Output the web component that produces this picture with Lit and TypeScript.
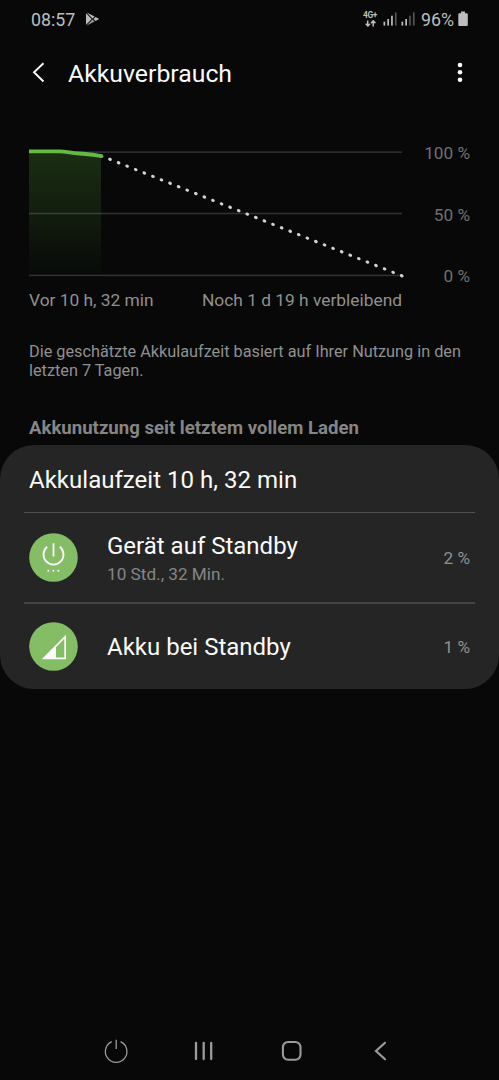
import { LitElement, html, css, svg } from "lit";
import { customElement } from "lit/decorators.js";

const dots = Array.from({ length: 35 }, (_, i) => ({
  x: 81 + i * 8.58,
  y: 18.3 + i * 3.425,
}));

@customElement("app-root")
export class AppRoot extends LitElement {
  static styles = css`
    :host {
      display: block;
      height: 1080px;
      background: #080808;
      color: #fafafa;
      font-family: Roboto, sans-serif;
      overflow: hidden;
    }
    .screen { display: flex; flex-direction: column; height: 1080px; }
    svg { display: block; flex: none; }
    span, p, h1, h2 { white-space: nowrap; margin: 0; font-weight: 400; }
    .status {
      display: flex; align-items: center; height: 40px;
      padding: 0 31px; color: #bdbdbd; font-size: 17.8px;
    }
    .status > span { line-height: 20px; }
    .status .play { margin-left: 10px; margin-top: -2px; }
    .status .right { margin-left: auto; display: flex; align-items: center; height: 38px; align-self: flex-start; }
    .right .net { margin-right: -1px; }
    .right .sim { margin-top: -1px; }
    .pct { font-size: 17.8px; margin: 2px 4px 0 2px; line-height: 20px; }
    .bar {
      display: flex; align-items: center; height: 66px; padding: 0 29px;
    }
    .bar h1 { font-size: 24.8px; margin-left: 20px; }
    .bar .more { margin-left: auto; }
    .chart { display: flex; height: 148px; margin-top: 30px; padding: 0 29px; justify-content: space-between; }
    .scale {
      display: flex; flex-direction: column; justify-content: space-between;
      align-items: flex-end; height: 150px; padding-top: 7px; box-sizing: border-box;
      font-size: 17.2px; line-height: 20px; color: #707070;
    }
    .captions {
      display: flex; justify-content: space-between; width: 373px;
      margin: 6px 0 0 29px; font-size: 17.35px; line-height: 20px; color: #909090;
    }
    .note { margin: 32px 29px 0; font-size: 16.27px; line-height: 19px; color: #909090; height: 38px; }
    .heading { margin: 37px 29px 0; font-size: 18.6px; line-height: 22px; font-weight: 700; color: #858585; }
    .card { margin-top: 6px; height: 244px; border-radius: 34px; background: #252525; display: flex; flex-direction: column; }
    .total { font-size: 24.05px; line-height: 70px; padding-left: 29px; height: 67px; }
    .line { height: 2px; margin: 0 24px; background: #444; flex: none; }
    .total + .line { height: 1px; margin-bottom: 1px; background: #505050; }
    .row { display: flex; align-items: center; padding: 0 29px; height: 88px; }
    .row.standby { box-sizing: border-box; padding-bottom: 2px; }
    .row.last { height: 85px; }
    .row.last svg { margin-top: -1px; }
    .names { display: flex; flex-direction: column; margin-left: 29px; flex: 1; }
    .name { font-size: 24px; line-height: 30px; }
    .standby .name { padding-top: 1px; }
    .time { font-size: 17.2px; line-height: 20px; color: #858585; margin-top: 3px; }
    .share { font-size: 17.2px; color: #909090; }
    .standby .share { padding-top: 2px; }
    .nav { margin-top: auto; height: 58px; display: grid; grid-template-columns: repeat(4, 88px); justify-content: center; padding-right: 3px; }
    .nav svg { margin: 0 auto; }
  `;

  private bars(lit: number) {
    const tops = [9.7, 7, 3.7, 0.4];
    return html`<svg class="sim" width="18" height="14" viewBox="0 0 18 14">
      ${tops.map((t, i) => svg`<rect x=${0.5 + i * 3.8} y=${t} width="1.7" height=${13.6 - t} fill=${i < lit ? "#bdbdbd" : "#555"} />`)}
    </svg>`;
  }

  render() {
    return html`<div class="screen">
      <div class="status">
        <span>08:57</span>
        <svg class="play" width="16" height="16" viewBox="0 0 16 16" fill="#bdbdbd">
          <path d="M1 2.2V13.8L6.7 8Z" /><path d="M1.7 1.4L9.6 5.6L7.5 7.4Z" />
          <path d="M1.7 14.6L9.6 10.4L7.5 8.6Z" opacity=".8" /><path d="M8.4 8L10.6 6L14.2 8L10.6 10Z" />
        </svg>
        <div class="right">
          <svg class="net" width="21" height="18" viewBox="0 0 21 18" fill="#bdbdbd">
            <text x="0" y="8.4" font-family="Roboto, sans-serif" font-size="8.4" font-weight="700" textLength="14.4">4G+</text>
            <path d="M4.7 10.5V16M2.7 13.8L4.9 16L7 13.8M10.2 16.4V11M8 13.1L10.2 10.9L12.4 13.1" fill="none" stroke="#bdbdbd" stroke-width="1.5" />
          </svg>
          ${this.bars(3)}${this.bars(2)}
          <span class="pct">96%</span>
          <svg width="10" height="16" viewBox="0 0 10 16"><path d="M3 .6H7V2.2H8.7Q9.8 2.2 9.8 3.3V14Q9.8 15 8.7 15H1.3Q.3 15 .3 14V3.3Q.3 2.2 1.3 2.2H3Z" fill="#bdbdbd" /></svg>
        </div>
      </div>

      <div class="bar">
        <svg width="19" height="24" viewBox="0 0 19 24"><path d="M14.5 2.3L5 11.3L14.5 20.5" fill="none" stroke="#fafafa" stroke-width="1.9" /></svg>
        <h1>Akkuverbrauch</h1>
        <svg class="more" width="20" height="24" viewBox="0 0 20 24" fill="#fafafa">
          <circle cx="10" cy="4" r="2.3" /><circle cx="10" cy="11.3" r="2.3" /><circle cx="10" cy="18.7" r="2.3" />
        </svg>
      </div>

      <div class="chart">
        <svg width="380" height="148" viewBox="0 -5 380 148">
          <defs><linearGradient id="fill" x1="0" y1="0" x2="0" y2="1">
            <stop offset="0" stop-color="#1b2e13" /><stop offset=".5" stop-color="#121d0e" /><stop offset="1" stop-color="#080a08" />
          </linearGradient></defs>
          <path d="M0 10.5H32L50 12.5L72 15V133H0Z" fill="url(#fill)" />
          <g fill="#b0b0b0" fill-opacity=".24">
            <rect y="10.3" width="373" height="1.6" /><rect y="71.7" width="373" height="1.6" /><rect y="133.6" width="373" height="1.6" />
          </g>
          <path d="M0 10.4H30C38 10.4 42 12.3 50 12.5C59 12.8 64 13.8 72.5 15.2" fill="none" stroke="#66b946" stroke-width="3.8" />
          <circle cx="72.5" cy="15.2" r="1.9" fill="#66b946" />
          ${dots.map((d) => svg`<ellipse cx=${d.x} cy=${d.y} rx="1.9" ry="1.55" transform="rotate(22 ${d.x} ${d.y})" fill="#d2d5d8" />`)}
        </svg>
        <div class="scale"><span>100 %</span><span>50 %</span><span>0 %</span></div>
      </div>
      <div class="captions"><span>Vor 10 h, 32 min</span><span>Noch 1 d 19 h verbleibend</span></div>
      <p class="note">Die geschätzte Akkulaufzeit basiert auf Ihrer Nutzung in den<br />letzten 7 Tagen.</p>
      <h2 class="heading">Akkunutzung seit letztem vollem Laden</h2>

      <div class="card">
        <div class="total">Akkulaufzeit 10 h, 32 min</div>
        <div class="line"></div>
        <div class="row standby">
          <svg width="49" height="49" viewBox="0 0 49 49">
            <circle cx="24.5" cy="24.5" r="24.3" fill="#84bd66" />
            <path d="M18.2 13.8A10 10 0 1 0 30.8 13.8M24.5 10.2V23.5" fill="none" stroke="#fafafa" stroke-width="1.8" />
            <g fill="#fafafa"><circle cx="19.3" cy="37.7" r="1" /><circle cx="24.4" cy="37.7" r="1" /><circle cx="29.4" cy="37.7" r="1" /></g>
          </svg>
          <div class="names"><span class="name">Gerät auf Standby</span><span class="time">10 Std., 32 Min.</span></div>
          <span class="share">2 %</span>
        </div>
        <div class="line"></div>
        <div class="row last">
          <svg width="49" height="49" viewBox="0 0 49 49">
            <circle cx="24.5" cy="24.5" r="24.3" fill="#84bd66" />
            <path fill-rule="evenodd" d="M12.7 37.2L37 12.7V37.2ZM27 25.2V35.5H35.3V16.8Z" fill="#fafafa" />
          </svg>
          <div class="names"><span class="name">Akku bei Standby</span></div>
          <span class="share">1 %</span>
        </div>
      </div>

      <div class="nav">
        <svg width="26" height="58" viewBox="0 0 26 58"><path d="M8.8 19.6A10.8 10.8 0 1 0 17.5 19.6M13.2 17.8V27" fill="none" stroke="#9b9b9b" stroke-width="1.3" /></svg>
        <svg width="26" height="58" viewBox="0 0 26 58"><path d="M5 20.8V37M12.7 20.8V37M20.2 20.8V37" fill="none" stroke="#9b9b9b" stroke-width="2.3" stroke-linecap="round" /></svg>
        <svg width="26" height="58" viewBox="0 0 26 58"><rect x="3.9" y="20" width="17.6" height="17.8" rx="5.2" fill="none" stroke="#9b9b9b" stroke-width="2.1" /></svg>
        <svg width="26" height="58" viewBox="0 0 26 58"><path d="M18 20.8L9 29L18 37.2" fill="none" stroke="#9b9b9b" stroke-width="2.2" stroke-linecap="round" /></svg>
      </div>
    </div>`;
  }
}
